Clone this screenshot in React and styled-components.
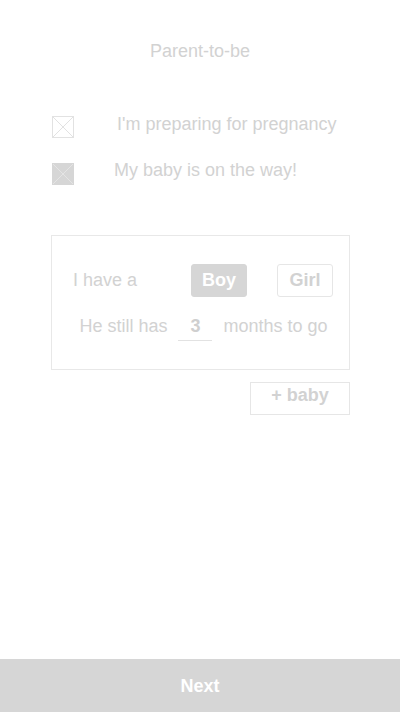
import React, { useState } from "react";
import styled, { createGlobalStyle } from "styled-components";

const GlobalStyle = createGlobalStyle`
    * { box-sizing: border-box; }
    body {
        margin: 0;
        background: #ffffff;
        font-family: "Liberation Sans", Arial, sans-serif;
    }
`;

const Page = styled.div`
    width: 400px;
    height: 712px;
    display: flex;
    flex-direction: column;
    background: #ffffff;
    color: #d2d2d2;
`;

const Title = styled.div`
    margin-top: 41px;
    text-align: center;
    font-size: 18px;
    line-height: 20px;
`;

const Options = styled.div`
    margin-top: 55px;
    padding-left: 52px;
    display: flex;
    flex-direction: column;
    gap: 25px;
`;

const OptionRow = styled.div`
    display: flex;
    align-items: center;
    height: 22px;
    cursor: pointer;
`;

const OptionText = styled.span`
    margin-left: ${(p) => p.$indent}px;
    font-size: 18px;
    line-height: 20px;
    position: relative;
    top: ${(p) => p.$shift}px;
`;

const Box = styled.div`
    width: 22px;
    height: 22px;
    border: 1px solid ${(p) => (p.$checked ? "#d6d6d6" : "#e2e2e2")};
    background: ${(p) => (p.$checked ? "#d6d6d6" : "#ffffff")};
    display: flex;
`;

const Card = styled.div`
    margin: 50px 0 0 51px;
    width: 299px;
    height: 135px;
    border: 1px solid #e8e8e8;
    padding: 28px 15px 0 21px;
`;

const GenderRow = styled.div`
    display: flex;
    align-items: center;
    font-size: 18px;
`;

const Label = styled.span`
    width: 118px;
`;

const GenderButton = styled.button`
    width: 56px;
    height: 33px;
    margin-left: ${(p) => p.$gap || 0}px;
    border-radius: 3px;
    border: 1px solid ${(p) => (p.$active ? "#d6d6d6" : "#e6e6e6")};
    background: ${(p) => (p.$active ? "#d6d6d6" : "#ffffff")};
    color: ${(p) => (p.$active ? "#ffffff" : "#d2d2d2")};
    font-family: inherit;
    font-size: 18px;
    font-weight: bold;
    padding: 0;
    cursor: pointer;
`;

const MonthsRow = styled.div`
    margin-top: 19px;
    margin-left: -15px;
    margin-right: -15px;
    display: flex;
    justify-content: center;
    align-items: flex-start;
    gap: 11px;
    font-size: 18px;
    line-height: 20px;
`;

const Months = styled.span`
    width: 34px;
    height: 25px;
    border-bottom: 1px solid #e2e2e2;
    text-align: center;
    font-weight: bold;
    color: #cfcfcf;
`;

const AddRow = styled.div`
    display: flex;
    justify-content: flex-end;
    padding-right: 50px;
    margin-top: 12px;
`;

const AddButton = styled.button`
    width: 100px;
    height: 33px;
    border: 1px solid #e6e6e6;
    border-radius: 0;
    background: #ffffff;
    color: #d2d2d2;
    font-family: inherit;
    font-size: 18px;
    font-weight: bold;
    padding: 0 0 6px;
    cursor: pointer;
`;

const NextBar = styled.button`
    margin-top: auto;
    height: 53px;
    width: 100%;
    border: none;
    background: #d6d6d6;
    color: #ffffff;
    font-family: inherit;
    font-size: 18px;
    font-weight: bold;
    padding: 1px 0 0;
    cursor: pointer;
`;

function CheckBox({ checked }) {
    const line = checked ? "#e4e4e4" : "#e2e2e2";
    return (
        <Box $checked={checked}>
            <svg width="20" height="20" viewBox="0 0 20 20">
                <line x1="0" y1="0" x2="20" y2="20" stroke={line} strokeWidth="1" />
                <line x1="20" y1="0" x2="0" y2="20" stroke={line} strokeWidth="1" />
            </svg>
        </Box>
    );
}

export default function App() {
    const [status, setStatus] = useState("onTheWay");
    const [gender, setGender] = useState("boy");

    return (
        <Page>
            <GlobalStyle />
            <Title>Parent-to-be</Title>

            <Options>
                <OptionRow onClick={() => setStatus("preparing")}>
                    <CheckBox checked={status === "preparing"} />
                    <OptionText $indent={43} $shift={-3}>I'm preparing for pregnancy</OptionText>
                </OptionRow>
                <OptionRow onClick={() => setStatus("onTheWay")}>
                    <CheckBox checked={status === "onTheWay"} />
                    <OptionText $indent={40} $shift={-4}>My baby is on the way!</OptionText>
                </OptionRow>
            </Options>

            <Card>
                <GenderRow>
                    <Label>I have a</Label>
                    <GenderButton $active={gender === "boy"} onClick={() => setGender("boy")}>
                        Boy
                    </GenderButton>
                    <GenderButton $gap={30} $active={gender === "girl"} onClick={() => setGender("girl")}>
                        Girl
                    </GenderButton>
                </GenderRow>
                <MonthsRow>
                    <span>He still has</span>
                    <Months>3</Months>
                    <span>months to go</span>
                </MonthsRow>
            </Card>

            <AddRow>
                <AddButton>+ baby</AddButton>
            </AddRow>

            <NextBar>Next</NextBar>
        </Page>
    );
}
